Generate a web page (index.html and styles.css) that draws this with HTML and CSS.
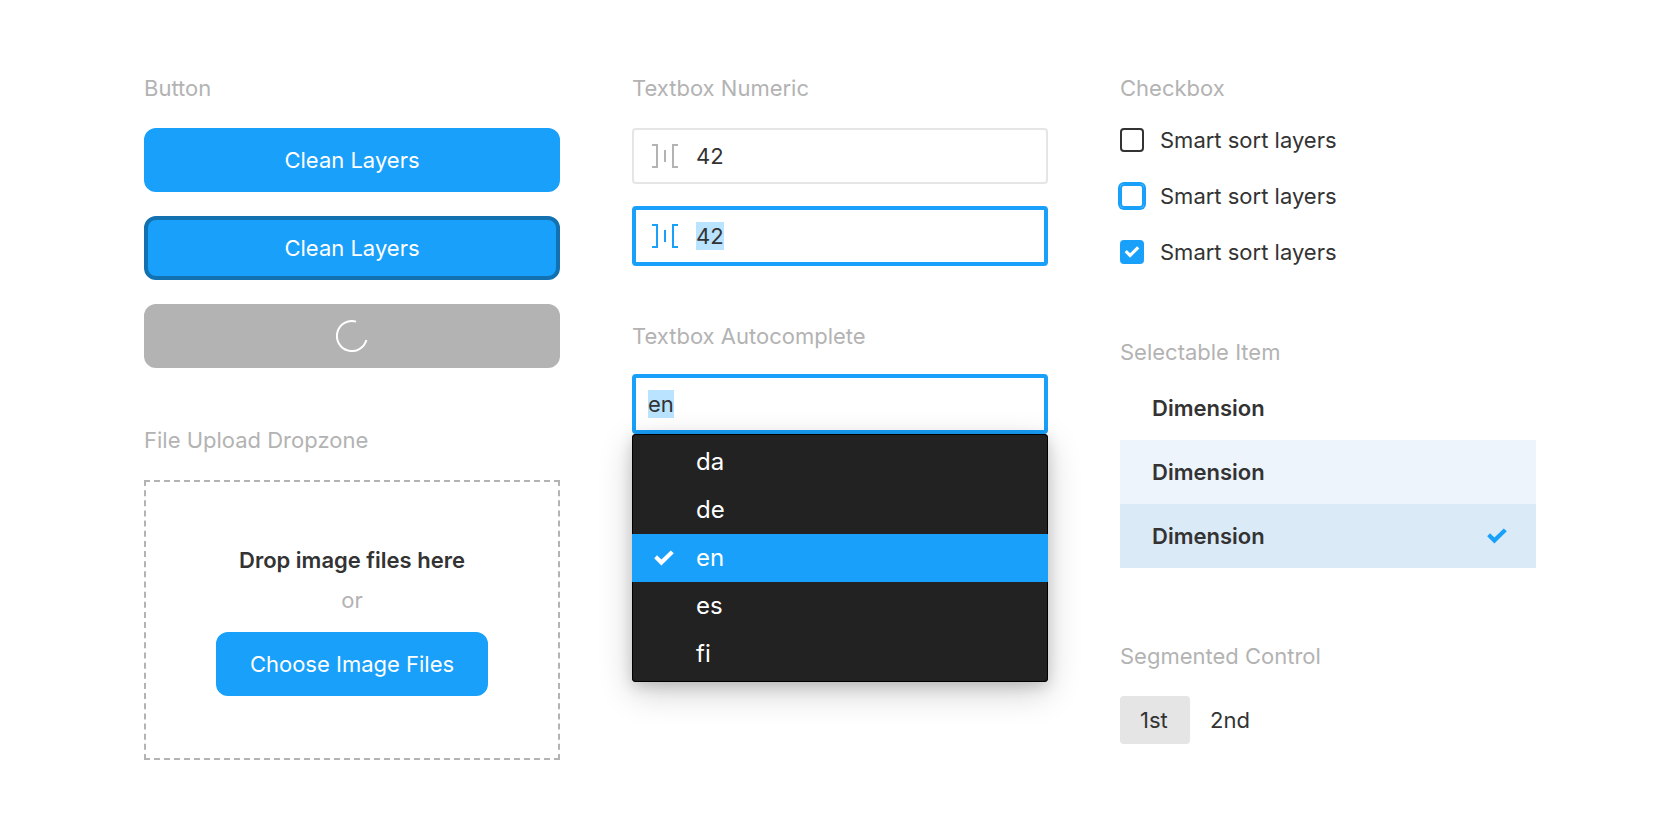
FILE: index.html
```
<!DOCTYPE html>
<html lang="en">
<head>
<meta charset="utf-8">
<title>UI components</title>
<link rel="stylesheet" href="styles.css">
</head>
<body>
<svg class="sprite" aria-hidden="true">
  <symbol id="check" viewBox="0 0 20 16"><path d="M0.2 8.2 3 5.3 7.4 9.6 16.8 0.4 19.8 3.3 7.4 15.5Z" fill="currentColor"/></symbol>
  <symbol id="spacing" viewBox="0 0 26 24"><path d="M0 0H6V24H0V22H4V2H0ZM12 6H14V18H12ZM20 0H26V2H22V22H26V24H20Z" fill="currentColor"/></symbol>
</svg>
<main class="board">
  <div class="column">
    <section class="group">
      <h2 class="heading">Button</h2>
      <div class="buttons">
        <button class="button" type="button">Clean Layers</button>
        <button class="button button-focused" type="button">Clean Layers</button>
        <button class="button button-loading" type="button" disabled aria-label="Loading">
          <svg class="spinner" viewBox="0 0 32 32" aria-hidden="true"><path d="M20 1.6A15 15 0 1 0 30.4 20" fill="none" stroke="currentColor" stroke-width="2"/></svg>
        </button>
      </div>
    </section>
    <section class="group">
      <h2 class="heading">File Upload Dropzone</h2>
      <div class="dropzone">
        <strong class="dropzone-title">Drop image files here</strong>
        <span class="dropzone-or">or</span>
        <button class="button button-fit" type="button">Choose Image Files</button>
      </div>
    </section>
  </div>

  <div class="column">
    <section class="group">
      <h2 class="heading">Textbox Numeric</h2>
      <div class="fields">
        <label class="field">
          <svg class="field-icon" aria-hidden="true"><use href="#spacing"/></svg>
          <input class="field-input" type="text" inputmode="numeric" value="42" aria-label="Spacing">
        </label>
        <label class="field field-focused">
          <svg class="field-icon" aria-hidden="true"><use href="#spacing"/></svg>
          <input class="field-input" type="text" inputmode="numeric" value="42" aria-label="Spacing, focused">
        </label>
      </div>
    </section>
    <section class="group">
      <h2 class="heading">Textbox Autocomplete</h2>
      <div class="autocomplete">
        <label class="field field-plain field-focused">
          <input class="field-input" type="text" value="en" aria-label="Language" role="combobox" aria-expanded="true" aria-controls="languages">
        </label>
        <ul class="menu" id="languages" role="listbox">
          <li class="menu-item" role="option">da</li>
          <li class="menu-item" role="option">de</li>
          <li class="menu-item menu-item-selected" role="option" aria-selected="true"><svg class="check" aria-hidden="true"><use href="#check"/></svg>en</li>
          <li class="menu-item" role="option">es</li>
          <li class="menu-item" role="option">fi</li>
        </ul>
      </div>
    </section>
  </div>

  <div class="column">
    <section class="group">
      <h2 class="heading">Checkbox</h2>
      <div class="checkboxes">
        <label class="checkbox"><input class="checkbox-box" type="checkbox">Smart sort layers</label>
        <label class="checkbox"><input class="checkbox-box checkbox-focused" type="checkbox">Smart sort layers</label>
        <label class="checkbox"><input class="checkbox-box" type="checkbox" checked><svg class="checkbox-mark" aria-hidden="true"><use href="#check"/></svg>Smart sort layers</label>
      </div>
    </section>
    <section class="group group-tight">
      <h2 class="heading">Selectable Item</h2>
      <div class="items">
        <button class="item" type="button">Dimension</button>
        <button class="item item-hover" type="button">Dimension</button>
        <button class="item item-selected" type="button" aria-pressed="true">Dimension<svg class="check" aria-hidden="true"><use href="#check"/></svg></button>
      </div>
    </section>
    <section class="group">
      <h2 class="heading">Segmented Control</h2>
      <div class="segments">
        <label class="segment"><input class="segment-radio" type="radio" name="segment" checked>1st</label>
        <label class="segment"><input class="segment-radio" type="radio" name="segment">2nd</label>
      </div>
    </section>
  </div>
</main>
</body>
</html>
```
FILE: styles.css
```
:root {
  --blue: #18a0fb;
  --text: #333;
  --muted: #b3b3b3;
  --line: #e5e5e5;
}

* { box-sizing: border-box; }

body {
  margin: 0;
  background: #fff;
  color: var(--text);
  font: 22px/32px Inter, "Liberation Sans", sans-serif;
}

button, input { font: inherit; color: inherit; }

.sprite { position: absolute; width: 0; height: 0; }

.board {
  display: grid;
  grid-template-columns: repeat(3, minmax(0, 1fr));
  gap: 72px;
  padding: 72px 144px;
}

.column { display: flex; flex-direction: column; gap: 56px; }

.group { display: flex; flex-direction: column; gap: 24px; }
.group-tight { gap: 8px; padding-bottom: 16px; }

.heading { margin: 0; font-size: 22px; font-weight: 400; color: var(--muted); }

.buttons { display: flex; flex-direction: column; gap: 24px; }

.button {
  display: flex;
  align-items: center;
  justify-content: center;
  height: 64px;
  padding: 0 32px;
  border: 4px solid var(--blue);
  border-radius: 12px;
  background: var(--blue);
  color: #fff;
}
.button-focused { border-color: #1271b1; }
.button-loading { border-color: var(--muted); background: var(--muted); }
.button-fit { margin-top: 8px; padding: 0 30px; }
.spinner { width: 32px; height: 32px; }

.dropzone {
  display: flex;
  flex-direction: column;
  align-items: center;
  gap: 8px;
  padding: 62px;
  border: 2px dashed var(--muted);
}
.dropzone-title { font-weight: 600; }
.dropzone-or { color: var(--muted); }

.fields { display: flex; flex-direction: column; gap: 24px; }

.field {
  display: flex;
  align-items: center;
  gap: 18px;
  height: 56px;
  padding: 0 18px;
  border: 2px solid var(--line);
  border-radius: 4px;
}
.field-focused {
  height: 60px;
  margin: -2px 0;
  padding: 0 16px;
  border: 4px solid var(--blue);
}
.field-plain { padding: 0 12px; }
.field-icon { width: 26px; height: 24px; color: var(--muted); }
.field-focused .field-icon { color: var(--blue); }
.field-input {
  field-sizing: content;
  height: 28px;
  padding: 0;
  border: 0;
  outline: 0;
  background: transparent;
  line-height: 28px;
}
.field-focused .field-input { background: #b9e3fe; }

.autocomplete { display: flex; flex-direction: column; }

.menu {
  margin: 2px 0 0;
  padding: 4px 0;
  border-radius: 4px;
  background: #222;
  box-shadow: inset 0 0 0 1px #000, 0 10px 34px rgba(0, 0, 0, 0.2), 0 4px 14px rgba(0, 0, 0, 0.15);
  list-style: none;
  color: #fff;
  font-size: 24px;
}
.menu-item {
  display: flex;
  align-items: center;
  height: 48px;
  padding-left: 64px;
}
.menu-item-selected { gap: 22px; padding-left: 22px; background: var(--blue); }
.check { width: 20px; height: 16px; }

.checkboxes { display: flex; flex-direction: column; gap: 32px; padding-bottom: 16px; }
.checkbox {
  display: grid;
  grid-template-columns: 24px auto;
  align-items: center;
  gap: 16px;
  line-height: 24px;
}
.checkbox-box {
  appearance: none;
  grid-area: 1 / 1;
  width: 24px;
  height: 24px;
  margin: 0;
  border: 2px solid var(--text);
  border-radius: 4px;
}
.checkbox-focused { border-color: var(--blue); box-shadow: 0 0 0 2px var(--blue); }
.checkbox-box:checked { border-color: var(--blue); background: var(--blue); }
.checkbox-mark { grid-area: 1 / 1; justify-self: center; width: 16px; height: 12px; color: #fff; }

.items { display: flex; flex-direction: column; }
.item {
  display: flex;
  align-items: center;
  justify-content: space-between;
  height: 64px;
  padding: 0 29px 0 32px;
  border: 0;
  background: transparent;
  font-weight: 600;
}
.item-hover { background: #edf4fb; }
.item-selected { background: #daeaf7; }
.item .check { color: var(--blue); }

.segments { display: flex; }
.segment {
  display: flex;
  align-items: center;
  min-width: 70px;
  height: 48px;
  padding: 0 20px;
  border-radius: 4px;
}
.segment:has(:checked) { background: var(--line); }
.segment-radio { position: absolute; opacity: 0; margin: 0; }
```
